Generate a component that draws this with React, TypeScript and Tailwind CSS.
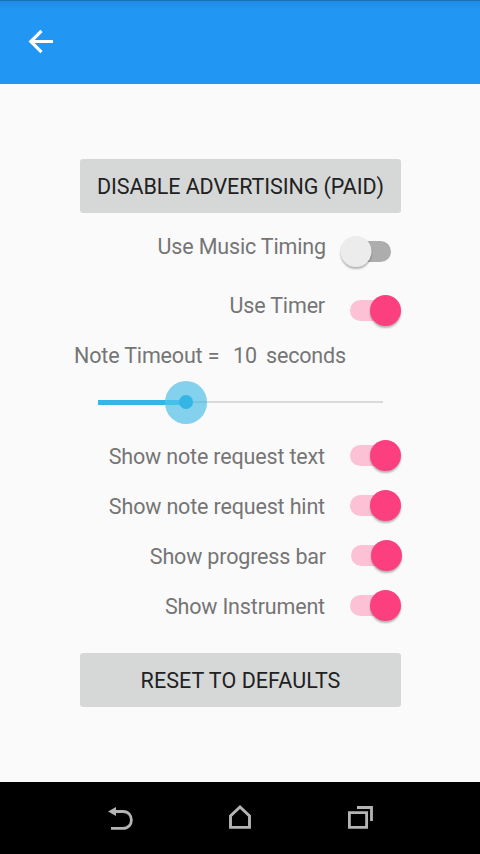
import React from 'react';

type SwitchProps = { on: boolean };

function Switch({ on }: SwitchProps) {
  return (
    <span role="switch" aria-checked={on} className={`flex h-[31px] w-[61px] shrink-0 items-center ${on ? 'justify-end' : 'justify-start'}`}>
      <span className={`flex h-[21px] w-[41px] items-center rounded-full ${on ? 'mr-[10px] justify-end bg-[#fdc1d6]' : 'ml-[10px] justify-start bg-[#adadad]'}`}>
        <span
          className={`h-[31px] w-[31px] shrink-0 rounded-full shadow-[0_2px_2px_rgba(0,0,0,0.28)] ${on ? '-mr-[10px] bg-[#fc407f]' : '-ml-[10px] translate-x-[0.5px] bg-[#ececec]'}`}
        />
      </span>
    </span>
  );
}

type RowProps = { label: string; on: boolean; row: string; text: string };

function SettingRow({ label, on, row, text }: RowProps) {
  return (
    <div className={`flex items-start ${row}`}>
      <span className={`flex-1 text-right leading-6 whitespace-nowrap ${text}`}>{label}</span>
      <Switch on={on} />
    </div>
  );
}

function WideButton({ children, text }: { children: string; text: string }) {
  return (
    <button className={`ml-20 flex h-[54px] w-[321px] shrink-0 items-center justify-center rounded-[3px] bg-[#d6d8d7] pt-[3px] whitespace-nowrap text-[#212121] ${text}`}>
      {children}
    </button>
  );
}

export default function App() {
  return (
    <div className="flex h-[854px] w-[480px] flex-col overflow-hidden bg-[#fafafa] font-[Roboto,sans-serif] text-[21.5px] tracking-[-0.16px] text-[#757575]">
      <header className="h-[84px] shrink-0 border-t border-[#1a70b5] bg-[linear-gradient(#1f8ae3,#2196f3_8px)] pt-[28px] pl-[28px]">
        <svg width="26" height="26" viewBox="0 0 26 26" fill="none" stroke="#fff" strokeWidth="3.2">
          <path d="M25 12.5H3M13.5 1.8L2.8 12.5L13.5 23.2" />
        </svg>
      </header>

      <main className="flex flex-1 flex-col pt-[75px]">
        <WideButton text="tracking-[-0.08px]">DISABLE ADVERTISING (PAID)</WideButton>

        <SettingRow label="Use Music Timing" on={false} row="mt-[23px] h-[59px] pr-[79px]" text="-mt-px pr-[14px]" />
        <SettingRow label="Use Timer" on row="h-[45px] pr-[79px]" text="-mt-px pr-[15px]" />

        <div className="flex h-[32px] items-start pt-[4px] pl-[74px] leading-6 whitespace-pre">
          <span className="w-[159px]">Note Timeout =</span>
          <span className="w-[33px]">10</span>
          <span>seconds</span>
        </div>

        <div className="flex h-[59px] items-center pt-[1px] pl-[98px]">
          <span className="h-[5px] w-[67px] bg-[#33b5e5]" />
          <span className="relative flex h-[43px] w-[42px] items-center justify-center rounded-full bg-[#33b5e5]/60">
            <span className="absolute left-0 h-[5px] w-[21px] bg-[#33b5e5]/70" />
            <span className="absolute right-0 h-[2px] w-[21px] bg-[#6cbcd8]/60" />
            <span className="relative h-[14px] w-[14px] rounded-full bg-[#33b5e5]" />
          </span>
          <span className="h-[2px] w-[176px] bg-[#d9d9d9]" />
        </div>

        <SettingRow label="Show note request text" on row="h-[50px] pt-[9px] pr-[79px]" text="pt-[5px] pr-[15px]" />
        <SettingRow label="Show note request hint" on row="h-[50px] pt-[9px] pr-[79px]" text="pt-[5px] pr-[15px]" />
        <SettingRow label="Show progress bar" on row="h-[50px] pt-[9px] pr-[78px]" text="pt-[5px] pr-[15px]" />
        <SettingRow label="Show Instrument" on row="h-[50px] pt-[9px] pr-[79px]" text="pt-[5px] pr-[15px]" />

        <div className="mt-[22px] flex">
          <WideButton text="tracking-[0.05px]">RESET TO DEFAULTS</WideButton>
        </div>
      </main>

      <nav className="flex h-[72px] shrink-0 items-start bg-black pt-[21px] pl-[106px] text-[#b4b4b4]">
        <svg width="30" height="30" viewBox="0 0 30 30" fill="none" stroke="currentColor" strokeWidth="2.8">
          <path d="M8 8.5H17C28.2 8.5 28.2 25.4 17 25.4H5" />
          <path d="M2 8.5L10 4V13Z" fill="currentColor" stroke="none" />
        </svg>
        <svg className="ml-[90px]" width="30" height="30" viewBox="0 0 30 30" fill="none" stroke="currentColor" strokeWidth="2.9">
          <path d="M4.5 24.4V12.9L14 4L23.5 12.9V24.4Z" />
        </svg>
        <svg className="ml-[90px]" width="30" height="30" viewBox="0 0 30 30" fill="none" stroke="currentColor" strokeWidth="2.8">
          <path d="M3.4 9.6H20.6V24.4H3.4ZM11 4.5H25.5V18" />
        </svg>
      </nav>
    </div>
  );
}
